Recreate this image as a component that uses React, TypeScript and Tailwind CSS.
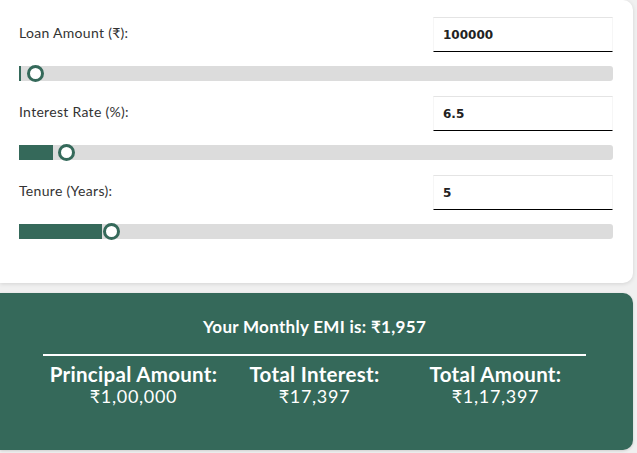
import React from 'react'

const GREEN = 'bg-[#35695a]'

interface SliderRowProps {
  label: string;
  value: string;
  fillClass: string;
  thumbGapClass: string;
}

function SliderRow({ label, value, fillClass, thumbGapClass }: SliderRowProps) {
  return (
    <div className="flex flex-col">
      {/* Label + input */}
      <div className="flex items-center justify-between">
        <span className="pb-[5px] text-[14px] text-[#333] font-normal tracking-[0.3px]">{label}</span>
        <div className="w-[180px] h-[35px] flex items-center px-[9px] border-t border-x border-t-[#e4e4e4] border-x-[#f6f6f6] border-b-[1.5px] border-b-black">
          <span className="font-['DejaVu_Sans',sans-serif] font-bold text-[12px] text-[#222]">{value}</span>
        </div>
      </div>

      {/* Slider */}
      <div className="mt-[14px] h-[15px] rounded-[3px] bg-[#dcdcdc] flex items-center">
        <div className={`h-full ${GREEN} ${fillClass}`} />
        <div className={`w-[17px] h-[17px] rounded-full bg-white border-[3px] border-[#35695a] shrink-0 ${thumbGapClass}`} />
      </div>
    </div>
  )
}

export default function App() {
  return (
    <div className="w-[637px] h-[453px] overflow-hidden bg-[#f0f0f0] pr-[4px] font-['Lato','Noto_Sans',sans-serif]">
      {/* Inputs card */}
      <div className="bg-white rounded-r-[10px] shadow-[0_1px_4px_rgba(0,0,0,0.12)] pl-[19px] pr-[20px] pt-[17px] pb-[44px] flex flex-col gap-[15px]">
        <SliderRow label="Loan Amount (₹):" value="100000" fillClass="w-[2px]" thumbGapClass="ml-[6px]" />
        <SliderRow label="Interest Rate (%):" value="6.5" fillClass="w-[34px]" thumbGapClass="ml-[5px]" />
        <SliderRow label="Tenure (Years):" value="5" fillClass="w-[83px]" thumbGapClass="ml-[1px]" />
      </div>

      {/* Result */}
      <div className={`mt-[10px] ${GREEN} rounded-r-[10px] pl-[43px] pr-[47px] pt-[23px] pb-[43px] text-white shadow-[0_1px_3px_rgba(0,0,0,0.15)]`}>
        <p className="text-center font-bold text-[17px] leading-[22px] tracking-[0.3px]">Your Monthly EMI is: ₹1,957</p>
        <div className="mt-[16px] h-[2px] bg-white" />
        <div className="grid grid-cols-3 mt-[7px]">
          {[
            ['Principal Amount:', '₹1,00,000'],
            ['Total Interest:', '₹17,397'],
            ['Total Amount:', '₹1,17,397'],
          ].map(([title, amount]) => (
            <div key={title} className="flex flex-col items-center">
              <span className="font-bold text-[20.5px] leading-[22px] tracking-[0.3px]">{title}</span>
              <span className="text-[18px] leading-[22px] tracking-[0.7px]">{amount}</span>
            </div>
          ))}
        </div>
      </div>
    </div>
  )
}
